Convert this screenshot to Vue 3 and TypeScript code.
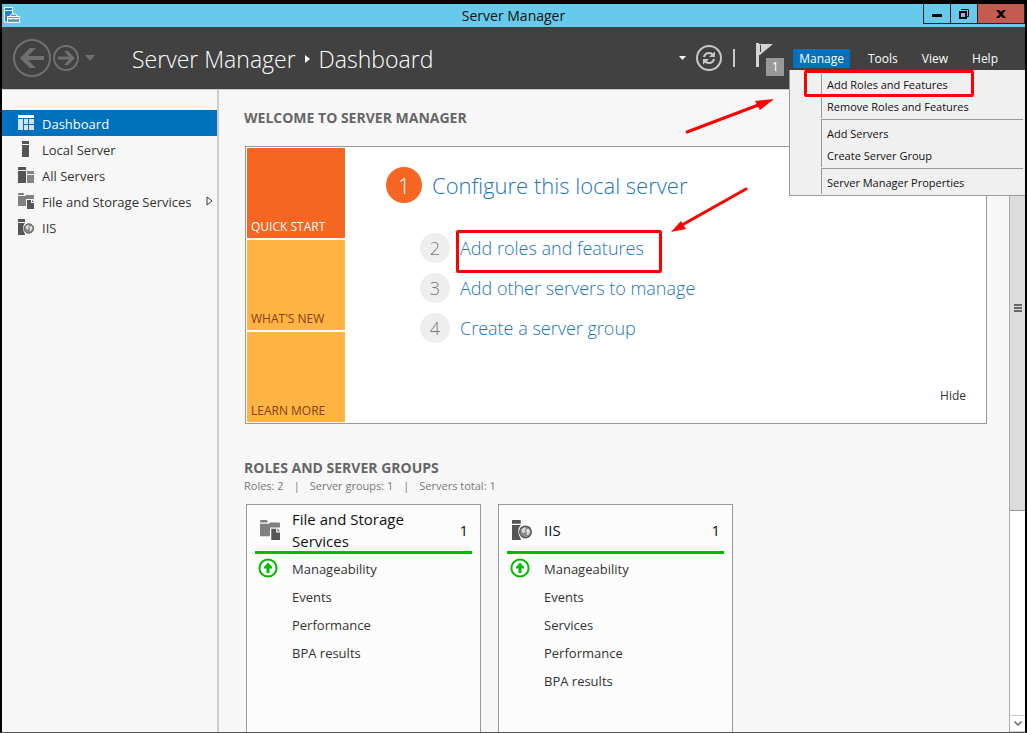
<script setup lang="ts">
import { ref } from 'vue'

type IconName = 'dashboard' | 'server' | 'servers' | 'storage' | 'iis'

interface NavItem {
  label: string
  icon: IconName
  expandable?: boolean
}

interface RoleCard {
  title: string
  icon: IconName
  count: number
  rows: string[]
}

const navItems: NavItem[] = [
  { label: 'Dashboard', icon: 'dashboard' },
  { label: 'Local Server', icon: 'server' },
  { label: 'All Servers', icon: 'servers' },
  { label: 'File and Storage Services', icon: 'storage', expandable: true },
  { label: 'IIS', icon: 'iis' },
]
const activeNav = ref('Dashboard')

const menus = ['Manage', 'Tools', 'View', 'Help']
const openMenu = ref('Manage')

const manageGroups: string[][] = [
  ['Add Roles and Features', 'Remove Roles and Features'],
  ['Add Servers', 'Create Server Group'],
  ['Server Manager Properties'],
]

const tiles = ['QUICK START', "WHAT'S NEW", 'LEARN MORE']
const activeTile = ref('QUICK START')

const steps = [
  { number: 2, label: 'Add roles and features', marked: true },
  { number: 3, label: 'Add other servers to manage', marked: false },
  { number: 4, label: 'Create a server group', marked: false },
]

const cards: RoleCard[] = [
  {
    title: 'File and Storage Services',
    icon: 'storage',
    count: 1,
    rows: ['Manageability', 'Events', 'Performance', 'BPA results'],
  },
  {
    title: 'IIS',
    icon: 'iis',
    count: 1,
    rows: ['Manageability', 'Events', 'Services', 'Performance', 'BPA results'],
  },
]
</script>

<template>
  <div class="window">
    <svg class="defs" aria-hidden="true">
      <symbol id="icon-dashboard" viewBox="0 0 16 16">
        <path fill="#fff" d="M0 0h16v3H0z" />
        <path fill="#cfe3f4" d="M0 4h5v11H0zM6 4h4v5H6zM11 4h5v5h-5zM6 10h4v5H6zM11 10h5v5h-5z" />
      </symbol>
      <symbol id="icon-server" viewBox="0 0 16 16">
        <path fill="#555" d="M4 0h7v3H4zM4 4h7v12H4z" />
      </symbol>
      <symbol id="icon-servers" viewBox="0 0 16 16">
        <path fill="#555" d="M0 0h8v3H0zM0 4h8v12H0z" />
        <path fill="#858585" d="M9 4h7v3H9zM9 8h7v8H9z" />
      </symbol>
      <symbol id="icon-storage" viewBox="0 0 16 16">
        <path fill="#808080" d="M0 1q0-1 1-1h4q1 0 1 1v1H0zM0 3h7l1-1h7q1 0 1 1v3h-8v7H0z" />
        <path fill="#555" d="M9 7h4v3h3v6H9z" />
        <path fill="#555" d="M14 7l2 2h-2z" />
      </symbol>
      <symbol id="icon-iis" viewBox="0 0 16 16">
        <path fill="#555" d="M0 0h7v3H0zM0 4h7q-2 2-2 5t2 6v1H0z" />
        <circle cx="10.8" cy="9.5" r="4.7" fill="#8a8a8a" stroke="#555" />
        <path fill="#e0e0e0" d="M7.6 7.6l2.6-1.8 1 1-1.4 1.4 1 1.2-1.4 1-1.4-.8zM12 7l2 .6.4 2-1.6 2.6-1-.4.2-2 -.8-1z" />
      </symbol>
    </svg>

    <header class="titlebar">
      <svg class="app-icon" viewBox="0 0 16 16" aria-hidden="true">
        <path fill="#1f82d0" stroke="#fff" d="M.5.5h8v3h-8zM.5 3.500h8v11.500h-8z" />
        <path fill="#6f93a8" stroke="#fff" d="M3.500 9.500h12v6h-12zM5.500 9.500l2-2.500h4l2 2.500M3.500 11.500h12M7 11v2M12 11v2" />
      </svg>
      <h1 class="window-title">Server Manager</h1>
      <div class="window-buttons">
        <button type="button" class="win-btn minimize" aria-label="Minimize">
          <svg width="10" height="10" viewBox="0 0 10 10"><path d="M0 5h10v3H0z" /></svg>
        </button>
        <button type="button" class="win-btn restore" aria-label="Restore">
          <svg width="10" height="10" viewBox="0 0 10 10">
            <path fill="none" stroke="#000" d="M2.500 1V.5h7v7H8" />
            <path fill-rule="evenodd" d="M0 2h8v8H0zM2 4v4h4V4z" />
          </svg>
        </button>
        <button type="button" class="win-btn close" aria-label="Close">
          <svg width="10" height="8" viewBox="0 0 10 8">
            <path d="M0 0h3l2 2 2-2h3L6.500 4 10 8H7L5 6 3 8H0l3.500-4z" />
          </svg>
        </button>
      </div>
    </header>

    <div class="toolbar">
      <div class="history">
        <button type="button" class="plain" aria-label="Back">
          <svg width="38" height="38" viewBox="0 0 38 38">
            <circle cx="19" cy="19" r="18" fill="none" stroke="#707070" stroke-width="2" />
            <path fill="#707070" d="M7 19L17 9h6l-8 8h16v4H15l8 8h-6z" />
          </svg>
        </button>
        <button type="button" class="plain" aria-label="Forward">
          <svg width="26" height="26" viewBox="0 0 26 26">
            <circle cx="13" cy="13" r="12" fill="none" stroke="#707070" stroke-width="2" />
            <path fill="#707070" d="M22 13l-7 7h-4l5-5.500H5v-3h11L11 6h4z" />
          </svg>
        </button>
        <button type="button" class="plain history-drop" aria-label="Recent pages">
          <svg width="10" height="6" viewBox="0 0 10 6"><path fill="#707070" d="M0 0h10L5 6z" /></svg>
        </button>
      </div>
      <nav class="breadcrumb" aria-label="Breadcrumb">
        <a href="#">Server Manager</a>
        <svg width="5" height="8" viewBox="0 0 5 8" aria-hidden="true"><path fill="#fff" d="M0 0l5 4-5 4z" /></svg>
        <span>Dashboard</span>
      </nav>
      <div class="tools">
        <button type="button" class="plain" aria-label="Path options">
          <svg width="7" height="4" viewBox="0 0 7 4"><path fill="#fff" d="M0 0h7L3.500 4z" /></svg>
        </button>
        <button type="button" class="plain refresh" aria-label="Refresh">
          <svg width="26" height="26" viewBox="0 0 26 26">
            <circle cx="13" cy="13" r="12" fill="none" stroke="#c8c8c8" stroke-width="2" />
            <path fill="none" stroke="#c8c8c8" stroke-width="2.200" d="M8 12q1-4 5-4 2.500 0 4 2M18 14q-1 4-5 4-2.500 0-4-2" />
            <path fill="#c8c8c8" d="M19 6.500v5.500h-6zM7 19.500V14h6z" />
          </svg>
        </button>
        <span class="divider"></span>
        <button type="button" class="plain flag" aria-label="Notifications">
          <svg width="18" height="25" viewBox="0 0 18 25">
            <path fill="#d4d4d4" d="M0 0h3v24H0zM3 1h14L4 12H3z" />
            <path stroke="#444" d="M4.500 2v7" />
          </svg>
          <span class="flag-count">1</span>
        </button>
      </div>
      <div class="menubar">
        <button
          v-for="menu in menus"
          :key="menu"
          type="button"
          class="menu-button"
          :class="{ open: menu === openMenu }"
          @click="openMenu = menu"
        >
          {{ menu }}
        </button>
      </div>
      <div v-if="openMenu === 'Manage'" class="dropdown" role="menu">
        <div v-for="(group, index) in manageGroups" :key="index" class="menu-group">
          <button v-for="entry in group" :key="entry" type="button" class="menu-item" role="menuitem">
            {{ entry }}
          </button>
        </div>
        <span class="mark menu-mark"></span>
        <svg class="arrow menu-arrow" width="90" height="36" viewBox="0 0 90 36" aria-hidden="true">
          <path stroke="#f00" stroke-width="3" stroke-linecap="round" d="M2 34L76 6" />
          <path fill="#f00" d="M89 1L70 3l5 9z" />
        </svg>
      </div>
    </div>

    <div class="body">
      <nav class="sidebar" aria-label="Servers and roles">
        <button
          v-for="item in navItems"
          :key="item.label"
          type="button"
          class="nav-item"
          :class="{ active: item.label === activeNav }"
          @click="activeNav = item.label"
        >
          <svg class="nav-icon" aria-hidden="true"><use :href="'#icon-' + item.icon" /></svg>
          <span class="nav-label">{{ item.label }}</span>
          <svg v-if="item.expandable" class="expander" width="7" height="10" viewBox="0 0 7 10" aria-hidden="true">
            <path fill="#fff" stroke="#333" d="M1 1l5 4-5 4z" />
          </svg>
        </button>
      </nav>

      <main class="content">
        <h2>WELCOME TO SERVER MANAGER</h2>
        <section class="welcome">
          <div class="tiles">
            <button
              v-for="tile in tiles"
              :key="tile"
              type="button"
              class="tile"
              :class="{ active: tile === activeTile }"
              @click="activeTile = tile"
            >
              {{ tile }}
            </button>
          </div>
          <div class="steps">
            <div class="step main-step">
              <span class="bubble">1</span>
              <a href="#">Configure this local server</a>
            </div>
            <div v-for="step in steps" :key="step.number" class="step">
              <span class="bubble">{{ step.number }}</span>
              <a href="#">{{ step.label }}</a>
              <template v-if="step.marked">
                <span class="mark step-mark"></span>
                <svg class="arrow step-arrow" width="78" height="46" viewBox="0 0 78 46" aria-hidden="true">
                  <path stroke="#f00" stroke-width="3" stroke-linecap="round" d="M76 2L12 38" />
                  <path fill="#f00" d="M1 45l10-11 5 8z" />
                </svg>
              </template>
            </div>
          </div>
          <button type="button" class="plain hide">Hide</button>
        </section>

        <h2>ROLES AND SERVER GROUPS</h2>
        <p class="summary">
          <span>Roles: 2</span><span>|</span><span>Server groups: 1</span><span>|</span><span>Servers total: 1</span>
        </p>
        <div class="cards">
          <article v-for="card in cards" :key="card.title" class="card">
            <header class="card-head">
              <svg class="card-icon" aria-hidden="true"><use :href="'#icon-' + card.icon" /></svg>
              <h3>{{ card.title }}</h3>
              <span class="count">{{ card.count }}</span>
            </header>
            <ul>
              <li v-for="(row, index) in card.rows" :key="row">
                <svg v-if="index === 0" class="status" width="20" height="20" viewBox="0 0 20 20" aria-hidden="true">
                  <circle cx="10" cy="10" r="8.600" fill="#fff" stroke="#0b0" stroke-width="2" />
                  <path fill="#0b0" d="M10 4.500l4 4.500v1.500h-2.500V15h-3v-4.500H6V9z" />
                </svg>
                <a href="#">{{ row }}</a>
              </li>
            </ul>
          </article>
        </div>
      </main>

      <div class="scrollbar" aria-hidden="true">
        <span class="scroll-button"></span>
        <div class="track">
          <div class="thumb"><span></span><span></span><span></span></div>
        </div>
        <span class="scroll-button down">
          <svg width="8" height="5" viewBox="0 0 8 5"><path fill="none" stroke="#666" stroke-width="1.500" d="M.5.5L4 4 7.500.5" /></svg>
        </span>
      </div>
    </div>
  </div>
</template>

<style>
body {
  background: #000;
}
</style>

<style scoped>
.window {
  box-sizing: border-box;
  height: 100vh;
  display: flex;
  flex-direction: column;
  overflow: hidden;
  border: 2px solid #000;
  border-top-width: 4px;
  border-bottom: 1px solid #555;
  background: #f7f7f7;
  color: #333;
  font: 13px/18px "Open Sans", "Noto Sans", sans-serif;
}
.window * {
  box-sizing: border-box;
}
.defs {
  position: absolute;
  width: 0;
  height: 0;
}
button {
  margin: 0;
  padding: 0;
  border: 0;
  background: none;
  color: inherit;
  font: inherit;
}
a {
  color: inherit;
  text-decoration: none;
}
h1, h2, h3, p, ul {
  margin: 0;
  padding: 0;
}
svg {
  display: block;
  flex: none;
}

.titlebar {
  flex: none;
  display: grid;
  grid-template-columns: 1fr auto 1fr;
  height: 23px;
  background: #66caea;
}
.app-icon {
  width: 16px;
  height: 16px;
  margin: 3px 2px;
}
.window-title {
  color: #111;
  font-size: 14px;
  font-weight: 400;
  line-height: 23px;
}
.window-buttons {
  justify-self: end;
  display: flex;
  height: 20px;
  border: 1px solid #222;
  border-top: 0;
}
.win-btn {
  display: flex;
  align-items: center;
  justify-content: center;
  width: 27px;
  border-right: 1px solid #222;
}
.win-btn.close {
  width: 46px;
  border-right: 0;
  background: #c35b51;
}

.toolbar {
  position: relative;
  z-index: 1;
  flex: none;
  display: flex;
  align-items: center;
  height: 63px;
  padding: 0 21px 0 11px;
  border-bottom: 1px solid #ccc;
  background: #414141;
  color: #fff;
}
.history {
  display: flex;
  align-items: center;
  gap: 2px;
}
.history-drop {
  margin-left: 4px;
}
.breadcrumb {
  display: flex;
  align-items: center;
  gap: 9px;
  margin-left: 37px;
  padding-top: 2px;
  font-size: 23px;
  font-weight: 300;
  line-height: 30px;
}
.tools {
  display: flex;
  align-items: center;
  margin-left: auto;
}
.refresh {
  margin: 0 11px 0 10px;
}
.divider {
  width: 2px;
  height: 18px;
  background: #c8c8c8;
}
.flag {
  position: relative;
  width: 28px;
  height: 33px;
  margin: 2px 9px 0 21px;
}
.flag svg {
  margin-bottom: 8px;
}
.flag-count {
  position: absolute;
  right: 0;
  bottom: 0;
  width: 18px;
  height: 18px;
  background: #999;
  font-size: 12px;
  line-height: 18px;
}
.menubar {
  display: flex;
  gap: 12px;
}
.menu-button {
  padding: 1px 6px 0;
  font-size: 12px;
  line-height: 18px;
}
.menu-button.open {
  background: #0071bc;
}
.dropdown {
  position: absolute;
  top: 43px;
  right: 0;
  width: 236px;
  padding: 4px 2px 1px 31px;
  border: 1px solid #999;
  border-width: 0 0 1px 1px;
  background: #f0f0f0;
  color: #111;
  font-size: 11px;
}
.menu-group {
  border-left: 1px solid #999;
}
.menu-group + .menu-group {
  padding-top: 3px;
  border-top: 1px solid #999;
  margin-top: 1px;
}
.menu-item {
  display: block;
  width: 100%;
  padding-left: 5px;
  line-height: 22px;
  text-align: left;
}
.mark {
  position: absolute;
  border: 3px solid #f00;
  border-radius: 2px;
  pointer-events: none;
}
.menu-mark {
  top: 0;
  left: 14px;
  width: 170px;
  height: 27px;
}
.arrow {
  position: absolute;
  pointer-events: none;
}
.menu-arrow {
  top: 28px;
  right: 250px;
}

.body {
  flex: 1;
  display: flex;
  min-height: 0;
}
.sidebar {
  flex: none;
  width: 217px;
  padding-top: 20px;
  border-right: 2px solid #ccc;
}
.nav-item {
  display: flex;
  align-items: center;
  width: 100%;
  height: 26px;
  padding-left: 16px;
  gap: 8px;
  text-align: left;
  white-space: nowrap;
}
.nav-item.active {
  background: #0071bc;
  color: #fff;
}
.nav-icon {
  width: 16px;
  height: 16px;
}
.nav-label {
  padding-top: 2px;
}
.expander {
  margin-left: auto;
  margin-right: 4px;
}

.content {
  flex: 1;
  min-width: 0;
  display: flex;
  flex-direction: column;
  overflow: hidden;
  padding: 19px 22px 0 26px;
}
h2 {
  flex: none;
  margin-left: -1px;
  color: #666;
  font-size: 14px;
  font-weight: 700;
  line-height: 18px;
}
.welcome {
  position: relative;
  flex: none;
  display: flex;
  margin: 19px 0 35px;
  padding: 1px;
  border: 1px solid #999;
  background: #fff;
}
.tiles {
  display: flex;
  flex-direction: column;
  gap: 2px;
  width: 98px;
}
.tile {
  display: flex;
  align-items: flex-end;
  height: 90px;
  padding: 0 4px 2px;
  background: #ffb444;
  color: #8a3c10;
  font-size: 12px;
  line-height: 18px;
}
.tile.active {
  background: #f46622;
  color: #fff;
}
.steps {
  flex: 1;
  padding: 19px 0 0 75px;
}
.step {
  position: relative;
  display: flex;
  align-items: center;
  gap: 10px;
  margin-bottom: 10px;
  color: #1b75bc;
  font-size: 18px;
  font-weight: 300;
  line-height: 30px;
}
.bubble {
  width: 30px;
  height: 30px;
  border-radius: 50%;
  background: #eee;
  color: #777;
  text-align: center;
}
.main-step {
  margin: 0 0 30px -34px;
  font-size: 22px;
  line-height: 36px;
}
.main-step .bubble {
  width: 36px;
  height: 36px;
  background: #f46622;
  color: #fff;
}
.step-mark {
  top: -3px;
  left: 36px;
  width: 206px;
  height: 43px;
}
.step-arrow {
  top: -46px;
  left: 250px;
}
.hide {
  position: absolute;
  right: 20px;
  bottom: 18px;
  font-size: 12px;
}

.summary {
  flex: none;
  display: flex;
  gap: 10px;
  margin-left: -1px;
  color: #777;
  font-size: 11px;
}
.cards {
  flex: 1;
  display: flex;
  gap: 17px;
  margin: 9px 0 0 1px;
}
.card {
  width: 235px;
  padding: 0 8px;
  border: 1px solid #999;
  border-bottom: 0;
  background: #fcfcfc;
}
.card-head {
  display: flex;
  align-items: center;
  height: 49px;
  padding: 4px 4px 0 5px;
  border-bottom: 3px solid #0b0;
  color: #111;
}
.card-icon {
  width: 20px;
  height: 20px;
}
h3 {
  flex: 1;
  margin-left: 12px;
  padding-right: 24px;
  font-size: 15px;
  font-weight: 400;
  line-height: 22px;
}
.count {
  font-size: 15px;
}
li {
  display: flex;
  align-items: center;
  position: relative;
  height: 28px;
  padding-left: 37px;
}
ul {
  padding-top: 1px;
}
.status {
  position: absolute;
  left: 3px;
  top: 3px;
}

.scrollbar {
  flex: none;
  display: flex;
  flex-direction: column;
  width: 16px;
  border-left: 1px solid #aaa;
  background: #fff;
}
.scroll-button {
  flex: none;
  display: flex;
  align-items: center;
  justify-content: center;
  height: 16px;
}
.scroll-button.down {
  height: 17px;
  border: 1px solid #ccc;
  border-width: 1px 0;
}
.track {
  flex: 1;
}
.thumb {
  display: flex;
  flex-direction: column;
  align-items: center;
  justify-content: center;
  gap: 1px;
  height: 66.5%;
  border-bottom: 1px solid #999;
  background: #dcdcdc;
}
.thumb span {
  width: 8px;
  height: 2px;
  background: #666;
}
</style>
